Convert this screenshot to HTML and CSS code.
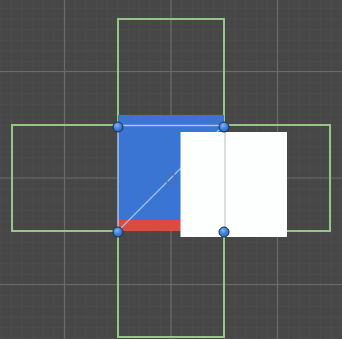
FILE: index.html
```html
<!DOCTYPE html>
<html lang="en">

<head>
    <meta charset="UTF-8">
    <meta name="viewport" content="width=device-width, initial-scale=1.0">
    <title>Scene View</title>
    <link rel="stylesheet" href="styles.css">
</head>

<body>
    <div class="scene">
        <svg class="scene-canvas" width="342" height="339" viewBox="0 0 342 339">
            <defs>
                <pattern id="minorGrid" x="0.4" y="7.8" width="10.65" height="10.65" patternUnits="userSpaceOnUse">
                    <path d="M0 0 V10.65 M0 0 H10.65" class="grid-minor" />
                </pattern>
                <radialGradient id="handleFill" cx="40%" cy="35%" r="70%">
                    <stop offset="0" stop-color="#7fb6f4" />
                    <stop offset="0.55" stop-color="#3d7fdc" />
                    <stop offset="1" stop-color="#2a62be" />
                </radialGradient>
            </defs>

            <!-- grid -->
            <rect width="342" height="339" fill="url(#minorGrid)" />
            <path class="grid-major" d="M64.5 0 V339 M171 0 V339 M277.5 0 V339 M0 71.5 H342 M0 178 H342 M0 284.5 H342" />

            <!-- unfolded cube outline -->
            <path class="net" d="M118 125 V19 H224 V125 H330 V231 H224 V337 H118 V231 H12 V125 Z" />

            <!-- sprite -->
            <rect class="sprite-blue" x="118" y="115" width="106" height="116" />
            <rect class="sprite-red" x="118" y="220" width="106" height="11" />

            <!-- rect tool -->
            <path class="rect-outline" d="M118 231 V125.5 H224" />
            <line class="rect-diag" x1="118" y1="231" x2="224" y2="125" />
            <circle class="pivot" cx="171" cy="179" r="5" />

            <!-- white quad on top -->
            <rect class="quad" x="180.5" y="132" width="106.5" height="105" />
            <line class="quad-edge" x1="225" y1="132" x2="225" y2="232" />

            <!-- handles -->
            <circle class="handle" cx="118" cy="127" r="5" />
            <circle class="handle" cx="224" cy="127" r="5" />
            <circle class="handle" cx="118" cy="232" r="5" />
            <circle class="handle" cx="224" cy="232" r="5" />
        </svg>
    </div>
</body>

</html>
```

FILE: styles.css
```css
body {
    margin: 0;
    padding: 0;
    background-color: #474747;
    font-family: "Liberation Sans", Arial, sans-serif;
    overflow: hidden;
}

.scene {
    width: 342px;
    height: 339px;
    background-color: #474747;
}

.scene-canvas {
    display: block;
}

.grid-minor {
    fill: none;
    stroke: #505050;
    stroke-width: 1;
}

.grid-major {
    fill: none;
    stroke: #6b6b6b;
    stroke-width: 1.2;
}

.net {
    fill: none;
    stroke: #96c688;
    stroke-width: 2;
}

.sprite-blue {
    fill: #3a75d4;
}

.sprite-red {
    fill: #df4a40;
}

.rect-outline {
    fill: none;
    stroke: #a9c4ec;
    stroke-width: 1.5;
}

.rect-diag {
    stroke: #9cc0f2;
    stroke-width: 1.3;
}

.pivot {
    fill: none;
    stroke: #4f6fa8;
    stroke-width: 1.5;
}

.quad {
    fill: #fdfefe;
}

.quad-edge {
    stroke: #d2d2d2;
    stroke-width: 1.5;
}

.handle {
    fill: url(#handleFill);
    stroke: #1e2b3e;
    stroke-width: 1;
}
```
